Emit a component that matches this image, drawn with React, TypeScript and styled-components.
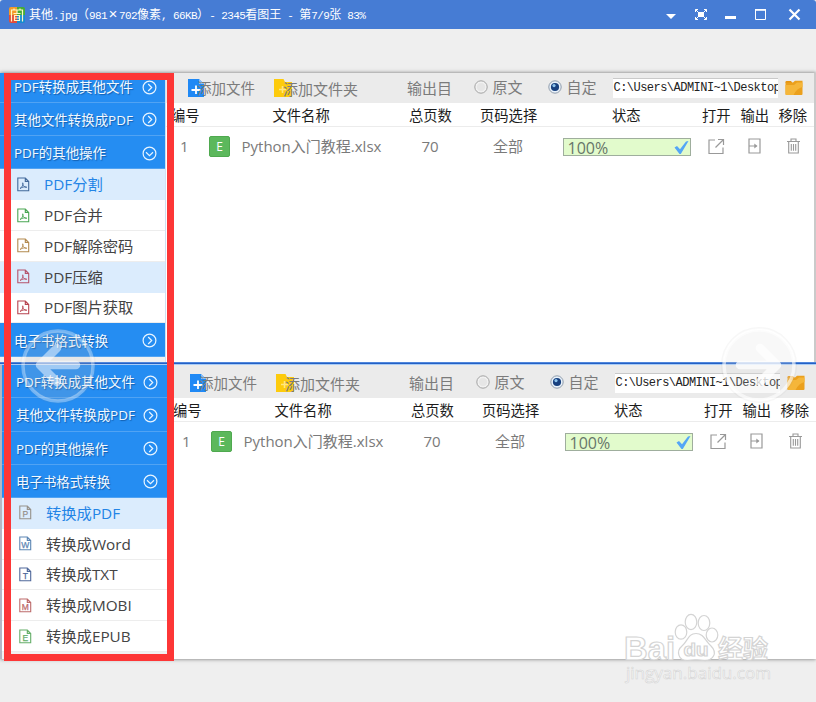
import React from "react";
import styled, { createGlobalStyle } from "styled-components";

const Global = createGlobalStyle`
  * { box-sizing: border-box; }
  body { margin: 0; background: #efefef; overflow: hidden; }
`;

const sans = `"Open Sans", "Noto Sans CJK SC", sans-serif`;
const mono = `"Liberation Mono", "Noto Sans CJK SC", monospace`;

const Window = styled.div`
  position: relative;
  width: 816px;
  height: 702px;
  overflow: hidden;
  background: #efefef;
  font-family: ${sans};
  white-space: nowrap;
`;

const TitleBar = styled.header`
  height: 29px;
  display: flex;
  align-items: center;
  padding-left: 9px;
  background: #467cd4;
  border-radius: 3px 3px 0 0;
  color: #fff;
`;

const Title = styled.h1`
  margin: 2px 0 0 4px;
  flex: 1;
  display: flex;
  font: 400 12px/16px ${mono};
`;

const Narrow = styled.span`
  font-size: 11px;
  letter-spacing: -0.6px;
  white-space: pre;
`;

const Times = styled.span`
  width: 12px;
  font-size: 15px;
  text-align: center;
`;

const WindowButtons = styled.div`
  display: flex;
  width: 151px;
  height: 29px;
`;

const Picture = styled.main`
  margin-top: 44px;
  height: 586px;
  background: #fff;
  box-shadow: 0 0 4px rgba(0, 0, 0, 0.55);
  display: flex;
  flex-direction: column;
`;

const Panel = styled.section<{ $second?: boolean }>`
  display: flex;
  height: ${(p) => (p.$second ? 294 : 289)}px;
  border-left: ${(p) => (p.$second ? "2px solid #b5b7c4" : "0")};
  border-right: ${(p) => (p.$second ? "0" : "2px solid #cacaca")};
`;

const Divider = styled.div`
  height: 3px;
  background: linear-gradient(#4f86dc 0 1px, #2460c4 1px 2px, #a9ccf6 2px);
`;

const Sidebar = styled.nav<{ $second?: boolean }>`
  width: ${(p) => (p.$second ? 165.5 : 166)}px;
  flex: none;
  border-right: 1px solid #cfe0f2;
  background: #f1f1f1;
`;

const Group = styled.div<{ $h: number; $up?: boolean }>`
  height: ${(p) => p.$h}px;
  padding: ${(p) => (p.$up ? 0 : 2)}px 8.5px 0 14px;
  display: flex;
  align-items: center;
  justify-content: space-between;
  background: #258df2;
  border-bottom: 1px solid #51a3f3;
  color: #f2f9ff;
  font-size: 13.45px;
  line-height: 20px;
  text-shadow: 1px 1px 1px rgba(0, 50, 110, 0.5);
`;

const Item = styled.div<{ $on?: boolean; $blue?: boolean }>`
  height: 30.8px;
  padding-left: 17px;
  display: flex;
  align-items: center;
  gap: 14px;
  background: ${(p) => (p.$on ? "#dbecfd" : "#fff")};
  border-bottom: 1px solid ${(p) => (p.$on ? "#dbecfd" : "#ededed")};
  color: ${(p) => (p.$blue ? "#2384e6" : "#444")};
  font-size: 15.3px;
  line-height: 22px;
`;

const Content = styled.div`
  flex: 1;
  min-width: 0;
`;

const Toolbar = styled.div<{ $second?: boolean }>`
  height: ${(p) => (p.$second ? 33 : 30)}px;
  padding: ${(p) => (p.$second ? "2px 0 0 22.5px" : "0 0 1px 22px")};
  display: grid;
  grid-template-columns: 86px 133px 66.5px 74px 65px 172px 20px;
  align-items: center;
  background: #ebebeb;
  color: #7b7b7b;
  font-size: 15px;
  line-height: 22px;
`;

const Tool = styled.div<{ $size?: number }>`
  display: flex;
  align-items: center;
  font-size: ${(p) => p.$size ?? 15}px;
`;

const ToolText = styled.span`
  margin: 2px 0 0 -9px;
`;

const Choice = styled.label`
  display: flex;
  align-items: center;
  gap: 5px;
  margin-top: -2px;
`;

const PathField = styled.div`
  width: 165px;
  height: 20px;
  padding-left: 1px;
  overflow: hidden;
  background: #fff;
  border-top: 1px solid #c9c9c9;
  color: #222;
  font: 400 12px/18px ${mono};
  letter-spacing: -0.53px;
`;

const HeadRow = styled.div<{ $second?: boolean }>`
  height: 24px;
  padding: 2px 0 0 ${(p) => (p.$second ? 5.5 : 5)}px;
  display: grid;
  grid-template-columns: 101.5px 136.5px 71px 132px 90px 38.5px 38px 36px;
  align-items: center;
  border-bottom: 1px solid #ececec;
  color: #1c1c1c;
  font-size: 14.3px;
  line-height: 20px;
`;

const FileRow = styled.div<{ $second?: boolean }>`
  height: 38px;
  padding-left: ${(p) => (p.$second ? 14.5 : 14)}px;
  display: grid;
  grid-template-columns: 29px 32.5px 180px 71.5px 69.5px 145.5px 40px 38.5px 20px;
  align-items: center;
  color: #7a7a7a;
  font-size: 15px;
  line-height: 22px;
`;

const FileBadge = styled.div`
  width: 21px;
  height: 21px;
  border-radius: 2px;
  background: #5cb85c;
  border: 1px solid #4fa94f;
  color: #fff;
  font-size: 12px;
  line-height: 19px;
  text-align: center;
`;

const Progress = styled.div`
  width: 128px;
  height: 18px;
  margin-top: 1px;
  padding: 2px 1px 0 4px;
  display: flex;
  align-items: center;
  justify-content: space-between;
  background: #e2fbcc;
  border: 1px solid #9fae9d;
  color: #67766a;
  font-size: 16px;
`;

const RedFrame = styled.div`
  position: absolute;
  left: 4px;
  top: 73px;
  width: 170px;
  height: 588px;
  border: 7px solid #fd3636;
`;

const Overlay = styled.svg<{ $x: number; $y: number }>`
  position: absolute;
  left: ${(p) => p.$x}px;
  top: ${(p) => p.$y}px;
`;

const Logo = () => (
  <svg width="16" height="16" viewBox="0 0 16 16">
    <path d="M0 2Q0 0 2 0H8V8H0Z" fill="#f39a28" />
    <path d="M8 0H14Q16 0 16 2V8H8Z" fill="#46ac35" />
    <path d="M0 8H8V16H2Q0 16 0 14Z" fill="#e34b38" />
    <path d="M8 8H16V14Q16 16 14 16H8Z" fill="#178bd0" />
    <path d="M2.5 14.5V3H13.5V14.5M5 1.5V3M11 1.5V3M8 3V6M4.5 6.5H11.5M5.5 8.5H10.5V13.5H5.5ZM5.5 11H10.5" fill="none" stroke="#fff8c8" strokeWidth="1.2" />
  </svg>
);

const ButtonIcons = () => (
  <svg width="151" height="29" viewBox="665 0 151 29" fill="none" stroke="#fff">
    <path d="M666 14H676L671 19Z" fill="#fff" stroke="none" />
    <path d="M698 12H704V17H698Z" fill="#fff" stroke="none" />
    <path d="M695.5 12V9.5H698M695.5 9.5L698 12M704 9.5H706.5V12M706.5 9.5L704 12M695.5 17V19.5H698M695.5 19.5L698 17M704 19.5H706.5V17M706.5 19.5L704 17" strokeWidth="1" />
    <path d="M725 17.5H736" strokeWidth="3" />
    <path d="M755.5 10H765.5V19.5H755.5Z" />
    <path d="M755 9.8H766" strokeWidth="1.6" />
    <path d="M789.5 9.5L799.5 19.5M799.5 9.5L789.5 19.5" strokeWidth="2.2" />
  </svg>
);

const Chevron = ({ down }: { down?: boolean }) => (
  <svg width="15" height="15" viewBox="0 0 15 15" fill="none" stroke="#e9f5ff" strokeWidth="1.2">
    <circle cx="7.5" cy="7.5" r="6.4" />
    <path d={down ? "M4 6.3L7.5 9.7L11 6.3" : "M6.2 4L9.7 7.5L6.2 11"} />
  </svg>
);

const Letter = styled.text`
  font: 400 8.5px "Liberation Sans", sans-serif;
  stroke-width: 0.25px;
`;

const DocIcon = ({ color, letter }: { color: string; letter?: string }) => (
  <svg width="13" height="15" viewBox="0 0 13 15" fill="none" stroke={color}>
    <path d="M.8 1H8.3L11.7 4.4V13.7H.8ZM8.3 1V4.4H11.7" strokeWidth="1.1" />
    {letter ? (
      <Letter x="6.3" y="12" textAnchor="middle" fill={color}>{letter}</Letter>
    ) : (
      <path d="M3 11.5C5 10.3 6.3 8 6 6.2C5.5 5 5.1 6.8 6.3 8.4C7.4 10 9 11 9.8 10.2C9.2 9.2 5 10 3 11.5" strokeWidth=".9" />
    )}
  </svg>
);

const AddFileIcon = () => (
  <svg width="18" height="18" viewBox="0 0 18 18">
    <path d="M0 0H11L16 5V18H0Z" fill="#2089f5" />
    <path d="M11 0V5H16Z" fill="#8bc2fa" />
    <path d="M8 6.5V15M3.5 11H12.5" stroke="#fff" strokeWidth="1.8" />
  </svg>
);

const AddFolderIcon = () => (
  <svg width="18" height="18" viewBox="0 0 18 18">
    <path d="M0 0H9.5L11 3H18V18H0Z" fill="#fdcb0c" />
    <path d="M8.5 7V14M5 10.5H12" stroke="#ffe680" strokeWidth="1.6" />
  </svg>
);

const Folder = () => (
  <svg width="19" height="16" viewBox="0 0 19 16">
    <path d="M.5 2Q.5 1 1.5 1H6L7.5 3H.5Z" fill="#e5930f" />
    <path d="M.5 2.5H8L10 .8H17.5V14Q17.5 15 16.5 15H1.5Q.5 15 .5 14Z" fill="#eba01d" />
    <path d="M.5 5H9L12 2.5H17.5V7Q12 8 8.5 15H1.5Q.5 15 .5 14Z" fill="#f5b63a" />
  </svg>
);

const Radio = ({ on }: { on?: boolean }) => (
  <svg width="14" height="14" viewBox="0 0 14 14">
    <circle cx="7" cy="7" r="6.2" fill={on ? "#e8f1fa" : "#f1f1f1"} stroke={on ? "#8f9cab" : "#a3a3a3"} />
    <circle cx="7" cy="7" r="4.1" fill={on ? "#17407f" : "#e6e6e6"} />
    {on && <circle cx="6" cy="5.6" r="1.6" fill="#8cc4ee" />}
  </svg>
);

const Check = () => (
  <svg width="15" height="14" viewBox="0 0 15 14">
    <path d="M.5 6.5L3 5L6 8.2L12 .5L14.5 0L6.8 13H5.5Z" fill="#54a6f6" />
  </svg>
);

const OpenIcon = () => (
  <svg width="17" height="17" viewBox="0 0 17 17" fill="none" stroke="#999" strokeWidth="1.2">
    <path d="M7 2H1V15.5H15V9.5M10 1.5H15.5V7M15.5 1.5L7.5 9.5" />
  </svg>
);

const ExportIcon = () => (
  <svg width="13" height="16" viewBox="0 0 13 16" fill="none" stroke="#999" strokeWidth="1.2">
    <path d="M1 5V1H12V15H1V11M1 5V11M1 8H8.5" />
    <path d="M6.3 5.5L9.5 8L6.3 10.5Z" fill="#999" stroke="none" />
  </svg>
);

const TrashIcon = () => (
  <svg width="13" height="16" viewBox="0 0 13 16" fill="none" stroke="#999" strokeWidth="1.1">
    <path d="M0 3.5H13M4 3.5V1H9V3.5M1.7 3.5V15H11.3V3.5M4.3 6V12.8M6.5 6V12.8M8.7 6V12.8" />
  </svg>
);

const Work = ({ second }: { second?: boolean }) => (
  <Content>
    <Toolbar $second={second}>
      <Tool $size={14.5}><AddFileIcon /><ToolText>添加文件</ToolText></Tool>
      <Tool><AddFolderIcon /><ToolText>添加文件夹</ToolText></Tool>
      <span>输出目</span>
      <Choice><Radio />原文</Choice>
      <Choice><Radio on />自定</Choice>
      <PathField>C:\Users\ADMINI~1\Desktop</PathField>
      <Tool><Folder /></Tool>
    </Toolbar>
    <HeadRow $second={second}>
      <span>编号</span><span>文件名称</span><span>总页数</span><span>页码选择</span>
      <span>状态</span><span>打开</span><span>输出</span><span>移除</span>
    </HeadRow>
    <FileRow $second={second}>
      <span>1</span>
      <FileBadge>E</FileBadge>
      <span>Python入门教程.xlsx</span>
      <span>70</span>
      <span>全部</span>
      <Progress><span>100%</span><Check /></Progress>
      <OpenIcon />
      <ExportIcon />
      <TrashIcon />
    </FileRow>
  </Content>
);

const WordMark = styled.text`
  font: 700 33px "Liberation Sans", sans-serif;
`;
const DuMark = styled.text`
  font: 700 19px "Liberation Sans", sans-serif;
`;
const HanMark = styled.text`
  font: 700 25px "Noto Sans CJK SC", sans-serif;
`;
const Site = styled.text`
  font: 400 17px "Open Sans", sans-serif;
  stroke-width: 0.6px;
`;

const Watermark = () => (
  <Overlay $x={618} $y={608} width="170" height="82" viewBox="618 608 170 82">
    <g fill="#fff" fillOpacity=".85" stroke="#d4d4d4" strokeWidth="1.2">
      <WordMark x="624" y="660" textLength="51" lengthAdjust="spacingAndGlyphs">Bai</WordMark>
      <ellipse cx="681" cy="632" rx="5.8" ry="7.2" />
      <ellipse cx="691" cy="622" rx="5.8" ry="7.7" />
      <ellipse cx="704" cy="623" rx="5.8" ry="7.5" />
      <ellipse cx="712" cy="635" rx="5.8" ry="7" />
      <path d="M696 633.5C704 633.5 705 641 711 646C718 653 713 661 704 660.5Q696 659 688 660.5C678 661 676 651 682 646C688 641 688 633.5 696 633.5Z" />
      <DuMark x="683.5" y="656" textLength="25" lengthAdjust="spacingAndGlyphs">du</DuMark>
      <HanMark x="718" y="658">经验</HanMark>
      <Site x="626" y="679" textLength="145" lengthAdjust="spacingAndGlyphs">jingyan.baidu.com</Site>
    </g>
  </Overlay>
);

const Arrow = ({ x, y, right }: { x: number; y: number; right?: boolean }) => (
  <Overlay $x={x} $y={y} width="76" height="76" viewBox="0 0 76 76" fill="none" stroke="#fff">
    <circle cx="38" cy="38" r="35" fill={right ? "rgba(225,225,225,.22)" : "rgba(190,190,190,.18)"} stroke="none" />
    <circle cx="38" cy="38" r="37" stroke="#888" strokeOpacity=".07" strokeWidth="2" />
    <circle cx="38" cy="38" r="35" strokeWidth="3.5" strokeOpacity={right ? 0.6 : 0.35} />
    <path
      d={right ? "M19 38H55M39 21L56 38L39 55" : "M56 37H20M37 20L20 37L37 54"}
      strokeWidth="8.5"
      strokeOpacity={right ? 0.75 : 0.5}
      strokeLinecap="round"
      strokeLinejoin="round"
    />
  </Overlay>
);

const pdfItems = [
  { label: "PDF分割", color: "#42699b", on: true, blue: true },
  { label: "PDF合并", color: "#4aa653" },
  { label: "PDF解除密码", color: "#b38a4f" },
  { label: "PDF压缩", color: "#b5536c", on: true },
  { label: "PDF图片获取", color: "#b84450" },
];

const bookItems = [
  { label: "转换成PDF", color: "#96918b", letter: "P", on: true, blue: true },
  { label: "转换成Word", color: "#5c86b4", letter: "W" },
  { label: "转换成TXT", color: "#50699b", letter: "T" },
  { label: "转换成MOBI", color: "#bd6b6b", letter: "M" },
  { label: "转换成EPUB", color: "#65ae69", letter: "E" },
];

export default function App() {
  return (
    <Window>
      <Global />
      <TitleBar>
        <Logo />
        <Title>
          <span>其他</span><Narrow>.jpg</Narrow><span>（</span><Narrow>981</Narrow>
          <Times>×</Times><Narrow>702</Narrow><span>像素</span><Narrow>, 66KB</Narrow>
          <span>）</span><Narrow>- 2345</Narrow><span>看图王</span><Narrow> - </Narrow>
          <span>第</span><Narrow>7/9</Narrow><span>张</span><Narrow> 83%</Narrow>
        </Title>
        <WindowButtons><ButtonIcons /></WindowButtons>
      </TitleBar>
      <Picture>
        <Panel>
          <Sidebar>
            <Group $h={29.6} $up>PDF转换成其他文件<Chevron /></Group>
            <Group $h={33.4}>其他文件转换成PDF<Chevron /></Group>
            <Group $h={33.4}>PDF的其他操作<Chevron down /></Group>
            {pdfItems.map((i) => (
              <Item key={i.label} $on={i.on} $blue={i.blue}><DocIcon color={i.color} />{i.label}</Item>
            ))}
            <Group $h={33.4}>电子书格式转换<Chevron /></Group>
          </Sidebar>
          <Work />
        </Panel>
        <Divider />
        <Panel $second>
          <Sidebar $second>
            <Group $h={33.4}>PDF转换成其他文件<Chevron /></Group>
            <Group $h={33.2}>其他文件转换成PDF<Chevron /></Group>
            <Group $h={33.2}>PDF的其他操作<Chevron /></Group>
            <Group $h={33.2}>电子书格式转换<Chevron down /></Group>
            {bookItems.map((i) => (
              <Item key={i.label} $on={i.on} $blue={i.blue}><DocIcon color={i.color} letter={i.letter} />{i.label}</Item>
            ))}
          </Sidebar>
          <Work second />
        </Panel>
      </Picture>
      <RedFrame />
      <Arrow x={20} y={328} />
      <Arrow x={721} y={327} right />
      <Watermark />
    </Window>
  );
}
